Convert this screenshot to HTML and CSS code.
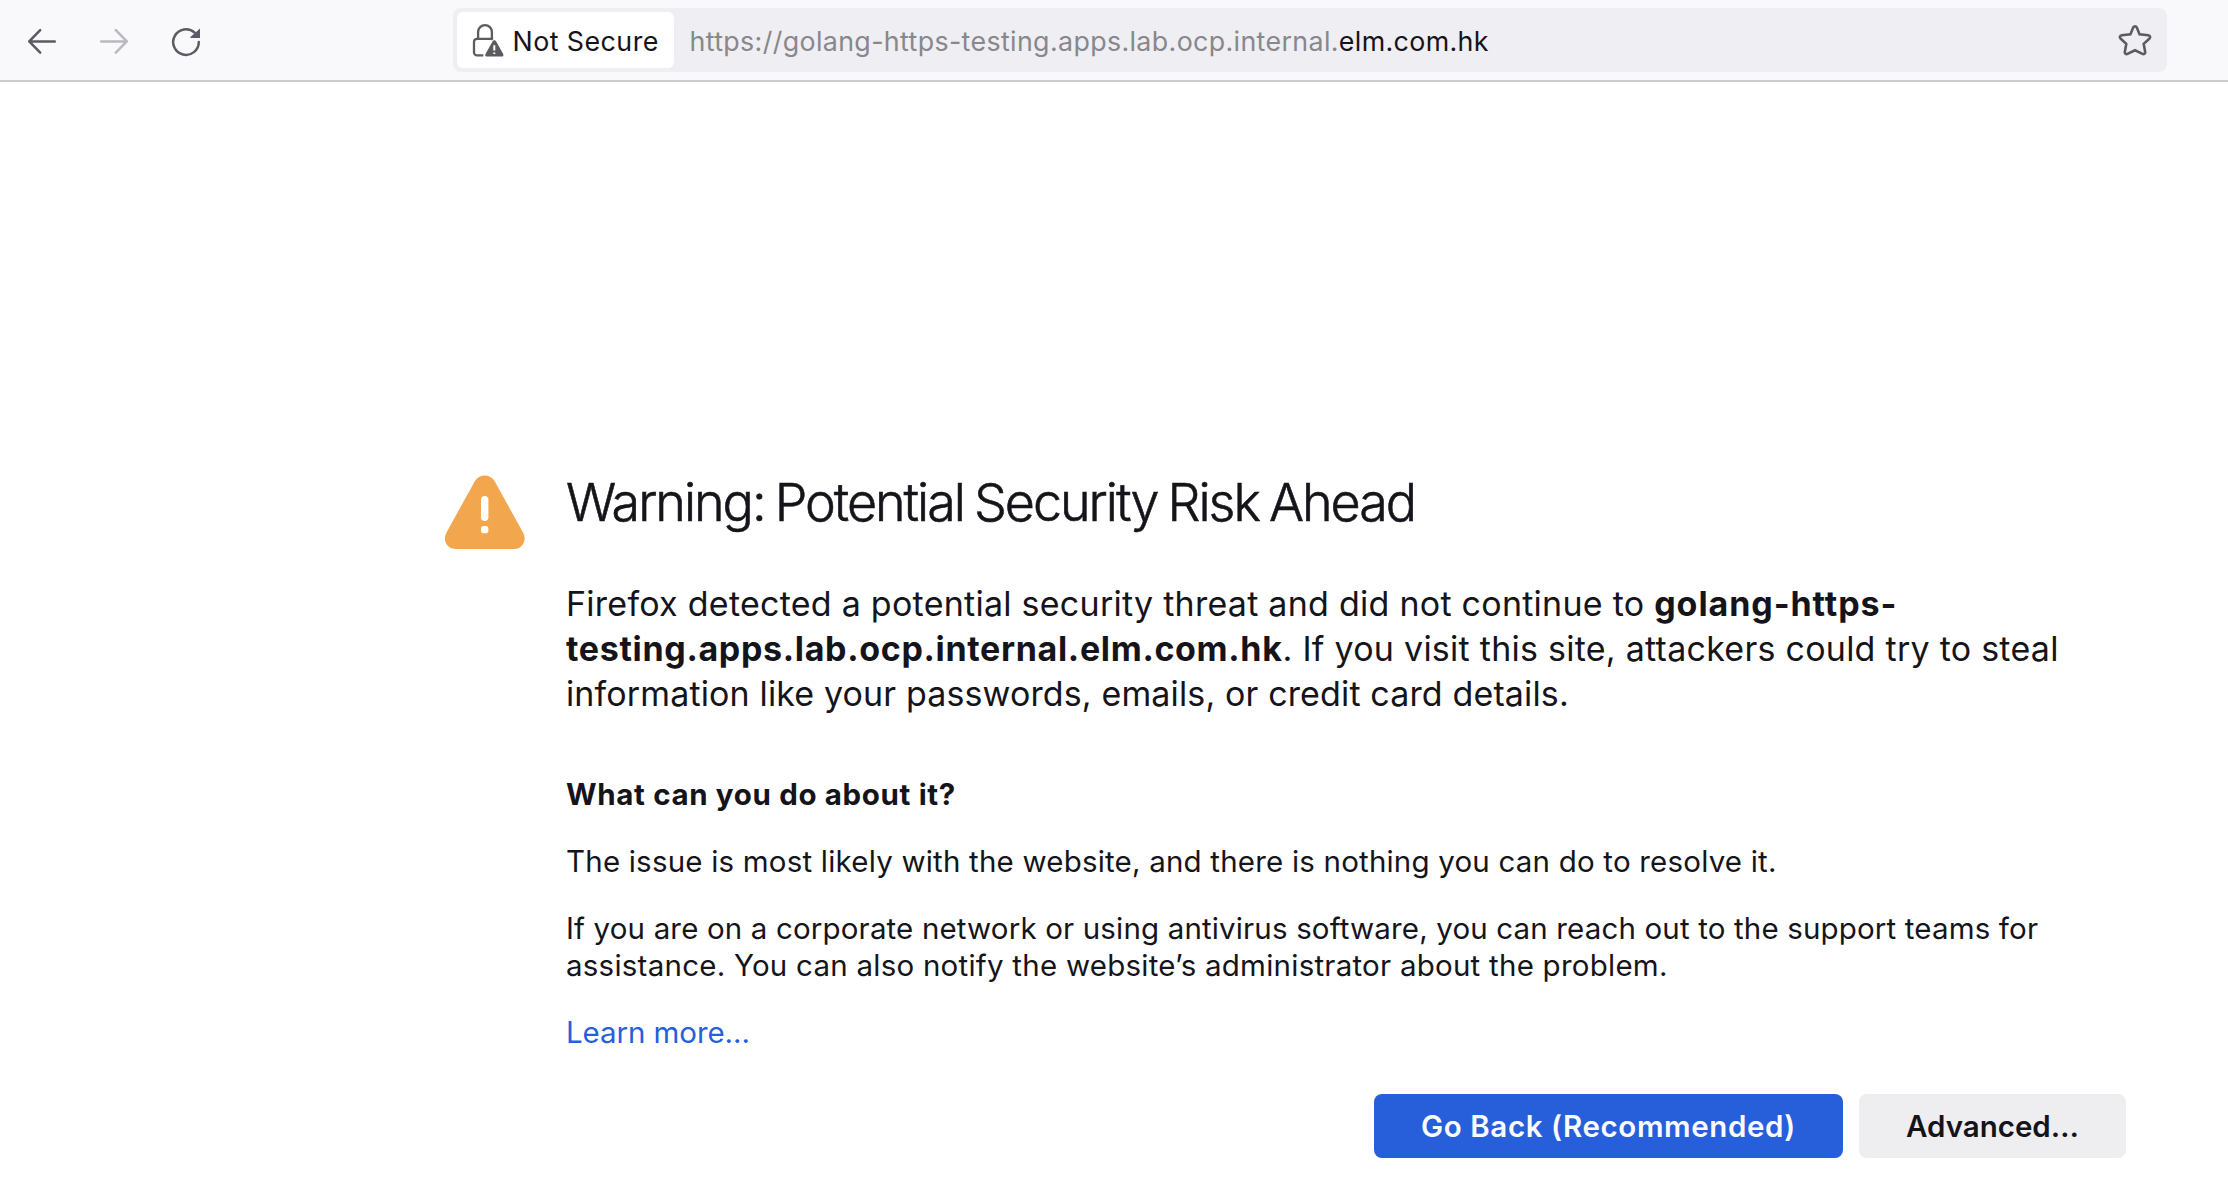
FILE: index.html
```
<!DOCTYPE html>
<html lang="en">
<head>
<meta charset="utf-8">
<title>Warning: Potential Security Risk Ahead</title>
<link rel="stylesheet" href="styles.css">
</head>
<body>
<header class="toolbar">
  <nav class="nav">
    <svg class="nav-icon" viewBox="0 0 32 32"><path d="M28.8 15.4H3.6M14.2 4.2 3.2 15.4l11 11.2"/></svg>
    <svg class="nav-icon nav-icon-disabled" viewBox="0 0 32 32"><path d="M3.2 15.4h25.2M17.8 4.2l11 11.2-11 11.2"/></svg>
    <svg class="nav-icon" viewBox="0 0 32 32"><path d="M28.8 16a12.8 12.8 0 1 1-4.2-9.4"/><path class="solid" d="M30 2.6V12h-9.2a.6.6 0 0 1-.4-1z"/></svg>
  </nav>
  <div class="urlbar">
    <div class="identity">
      <svg class="lock" viewBox="0 0 32 34"><path d="M6.1 15.5V9a6.900 6.900 0 0 1 13.800 0v6.500"/><path d="M20.500 15.800H5a3 3 0 0 0-3 3v10.600a3 3 0 0 0 3 3h6.300M19 15.800a3 3 0 0 1 1.900.7"/><path class="solid" d="M20.500 18.400a2.100 2.100 0 0 1 3.700 0l7 12.500c.7 1.300-.1 2.600-1.500 2.600H15c-1.400 0-2.200-1.300-1.500-2.600z"/><path class="mark" d="M22.300 22.300v5.200M22.300 29.500v1.600"/></svg>
      <span class="identity-label">Not Secure</span>
    </div>
    <div class="url"><span class="url-sub">https://golang-https-testing.apps.lab.ocp.internal.</span><span class="url-domain">elm.com.hk</span></div>
    <svg class="star" viewBox="0 0 36 36"><path d="M16.300 5.300a1.900 1.900 0 0 1 3.400 0L22.600 12.400l8.700.9c1.800.2 2.400 2 1.200 3.200l-5.800 5.400 1.500 8c.3 1.700-1.200 2.700-2.700 2L18 28.300l-7.500 3.600c-1.500.7-3-.3-2.700-2l1.500-8-5.800-5.400c-1.200-1.200-.6-3 1.200-3.200l8.700-.9z"/></svg>
  </div>
</header>
<main class="page">
  <svg class="warning" viewBox="0 0 80 75"><path d="M29.800 6.200C34-1.400 45.500-1.400 49.700 6.200L78 57.500C82.300 65.400 77.500 74 69 74H10.500C2 74-2.800 65.400 1.500 57.500z"/><rect x="36" y="21" width="7.400" height="25" rx="3.700"/><rect x="36" y="51" width="7.400" height="7.200" rx="2.800"/></svg>
  <div class="content">
    <h1 class="title">Warning: Potential Security Risk Ahead</h1>
    <p class="intro">Firefox detected a potential security threat and did not continue to <b class="host-start">golang-https-</b><br><b class="host">testing.apps.lab.ocp.internal.elm.com.hk</b>. If you visit this site, attackers could try to steal<br><span class="intro-end">information like your passwords, emails, or credit card details.</span></p>
    <h2 class="subtitle">What can you do about it?</h2>
    <p class="text">The issue is most likely with the website, and there is nothing you can do to resolve it.</p>
    <p class="text text-network">If you are on a corporate network or using antivirus software, you can reach out to the support teams for<br><span class="text-admin">assistance. You can also notify the website’s administrator about the problem.</span></p>
    <a class="learn">Learn more…</a>
    <div class="actions">
      <button class="button primary">Go Back (Recommended)</button>
      <button class="button secondary">Advanced…</button>
    </div>
  </div>
</main>
</body>
</html>
```
FILE: styles.css
```
* { box-sizing: border-box; }
body {
  margin: 0;
  height: 1202px;
  overflow: hidden;
  background: #fff;
  color: #15141a;
  font-family: Inter, "Liberation Sans", sans-serif;
}
.toolbar {
  display: flex;
  justify-content: space-between;
  height: 82px;
  padding: 8px 61px 0 26px;
  background: #f9f9fb;
  border-bottom: 2px solid #ccc;
}
.nav { display: flex; gap: 40px; padding-top: 18px; }
.nav-icon {
  width: 32px;
  height: 32px;
  fill: none;
  stroke: #5b5b66;
  stroke-width: 2.5;
  stroke-linecap: round;
  stroke-linejoin: round;
}
.nav-icon-disabled { opacity: .4; }
.nav-icon .solid { fill: #5b5b66; stroke: none; }
.urlbar {
  display: flex;
  align-items: center;
  width: 1714px;
  height: 64px;
  padding: 0 14px 0 4px;
  border-radius: 8px;
  background: #efeef3;
  font-size: 26.8px;
  white-space: nowrap;
}
.identity {
  display: flex;
  align-items: center;
  width: 217px;
  height: 56px;
  padding-left: 15px;
  border-radius: 6px;
  background: #fff;
}
.lock {
  width: 32px;
  height: 34px;
  fill: none;
  stroke: #5b5b60;
  stroke-width: 2.3;
}
.lock .solid { fill: #5b5b60; stroke: none; }
.lock .mark { stroke: #fff; stroke-width: 2; }
.identity-label { padding: 2px 0 0 8.5px; letter-spacing: .45px; }
.url { flex: 1; padding: 2px 0 0 15.5px; letter-spacing: .36px; }
.url-sub { color: #88878c; }
.star { width: 36px; height: 36px; fill: none; stroke: #5b5b60; stroke-width: 2.6; }
.page { display: flex; padding: 390px 102px 0 445px; }
.warning { width: 80px; height: 75px; margin-top: 3px; fill: #f2a74e; }
.warning rect { fill: #fff; }
.content { width: 1560px; margin-left: 41px; white-space: nowrap; }
.title {
  margin: 0;
  padding-top: 1px;
  font-size: 52px;
  line-height: 60px;
  font-weight: 300;
  letter-spacing: -2.02px;
  word-spacing: -2.5px;
  -webkit-text-stroke: .6px #15141a;
}
.intro { margin: 48px 0 0; font-size: 34px; line-height: 45px; letter-spacing: .255px; }
.host-start { letter-spacing: .92px; }
.host { letter-spacing: .67px; }
.intro-end { letter-spacing: .135px; }
.subtitle { margin: 60px 0 0; font-size: 29.5px; line-height: 37px; letter-spacing: .65px; }
.text { margin: 30px 0 0; font-size: 29.5px; line-height: 37px; letter-spacing: .198px; }
.text-network { letter-spacing: .154px; }
.text-admin { letter-spacing: .24px; }
.learn {
  display: block;
  margin-top: 30px;
  font-size: 29.5px;
  line-height: 37px;
  letter-spacing: -.08px;
  color: #275fdb;
}
.actions { display: flex; justify-content: flex-end; gap: 16px; margin-top: 43px; }
.button {
  height: 64px;
  padding: 1px 0 0;
  border: 0;
  border-radius: 8px;
  font: 600 29.5px/63px Inter, sans-serif;
}
.primary { width: 469px; background: #275fdb; color: #fbfbfe; letter-spacing: .6px; }
.secondary { width: 267px; background: #eeeef0; color: #15141a; }
```
